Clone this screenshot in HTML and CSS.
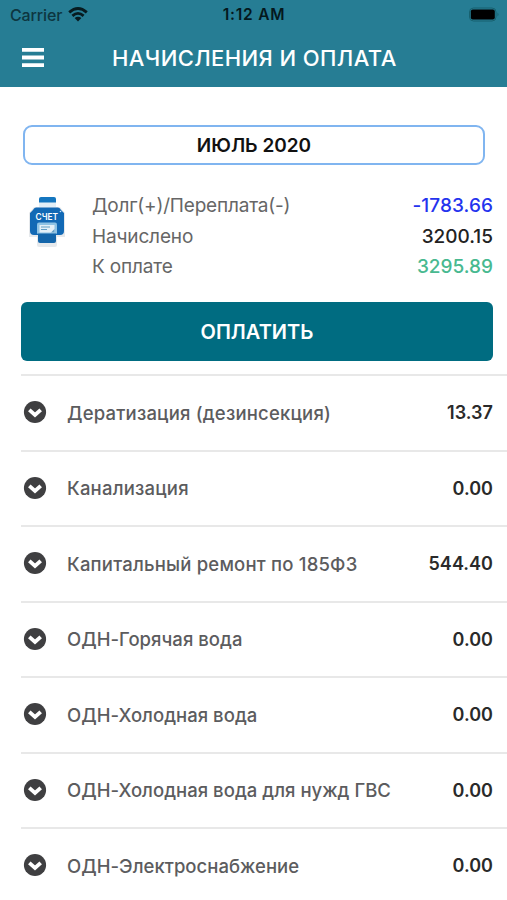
FILE: index.html
```html
<!DOCTYPE html>
<html lang="ru">
<head>
<meta charset="utf-8">
<title>Начисления и оплата</title>
<link rel="stylesheet" href="styles.css">
</head>
<body>
<svg width="0" height="0" class="defs" aria-hidden="true">
  <symbol id="chev" viewBox="0 0 24 24">
    <circle cx="12" cy="12" r="11.1" fill="#3f3f41"/>
    <path d="M6.3 9.8 L12 14.9 L17.7 9.8" fill="none" stroke="#fff" stroke-width="3.8"/>
  </symbol>
</svg>
<header class="header">
  <div class="status">
    <div class="carrier"><span>Carrier</span>
      <svg class="wifi" width="20" height="15" viewBox="0 0 20 15"><g fill="none" stroke="#071b20" stroke-width="2.8"><path d="M1.2 5.4 Q10 -2.4 18.8 5.4"/><path d="M4.4 8.9 Q10 3.9 15.6 8.9"/></g><path d="M6.6 11.1 Q10 8.2 13.4 11.1 L10 14.6Z" fill="#071b20"/></svg>
    </div>
    <span class="time">1:12 AM</span>
    <svg class="battery" width="32" height="15" viewBox="0 0 32 15"><rect x=".5" y="1" width="26.5" height="13" rx="4" fill="none" stroke="#17616f" stroke-width="1"/><rect x="1.8" y="2.5" width="24" height="10" rx="2" fill="#000"/><path d="M28.5 5.5 Q30.5 7.5 28.5 9.5Z" fill="#17616f"/></svg>
  </div>
  <div class="bar">
    <svg class="menu" width="22" height="19" viewBox="0 0 22 19"><path d="M0 1.9H22M0 9.5H22M0 17.1H22" stroke="#fff" stroke-width="3.8"/></svg>
    <h1 class="title">НАЧИСЛЕНИЯ И ОПЛАТА</h1>
  </div>
</header>
<main>
  <div class="month"><span>ИЮЛЬ 2020</span></div>
  <section class="summary">
    <svg class="printer" width="40" height="54" viewBox="0 0 40 54">
      <path d="M2 18 L7 12 H33 L38 18 V42 H30 V50 Q30 52 28 52 H12 Q10 52 10 50 V42 H2Z" fill="#d9dde2" opacity=".65"/>
      <path d="M12 10 V4 Q12 2 14 2 H27 Q29 2 29 4 V10Z" fill="#1476bf"/>
      <rect x="12" y="7.5" width="17" height="5" fill="#e3eff7"/>
      <path d="M9 12.5 H31 Q33 12.5 34 15 L37 18 V36 Q37 40 33 40 H7 Q3 40 3 36 V18 L6 15 Q7 12.5 9 12.5Z" fill="#1269b5"/>
      <circle cx="33.5" cy="16.5" r=".8" fill="#c5e4ff"/>
      <text x="19.8" y="25.4" text-anchor="middle" class="ptext">СЧЕТ</text>
      <rect x="10" y="27.5" width="20" height="12" rx="2" fill="#8fc3e4"/>
      <rect x="12.5" y="30" width="15" height="7.5" fill="#e4f0f7"/>
      <path d="M14 32H23M14 34.5H20" stroke="#639fc6" stroke-width="1.2"/>
      <path d="M24 37.5 L27.5 34 V37.5Z" fill="#639fc6"/>
      <path d="M11 38.5 H29 V46 Q29 48 27 48 H13 Q11 48 11 46Z" fill="#1365aa"/>
    </svg>
    <div class="lines">
      <div class="line"><span class="s1">Долг(+)/Переплата(-)</span><b class="blue">-1783.66</b></div>
      <div class="line mid"><span class="s2">Начислено</span><b class="dark">3200.15</b></div>
      <div class="line"><span class="s3">К оплате</span><b class="green">3295.89</b></div>
    </div>
  </section>
  <button class="pay"><span>ОПЛАТИТЬ</span></button>
  <ul class="list">
    <li><svg class="chev"><use href="#chev"/></svg><span class="wide">Дератизация (дезинсекция)</span><b>13.37</b></li>
    <li><svg class="chev"><use href="#chev"/></svg><span class="wide">Канализация</span><b>0.00</b></li>
    <li><svg class="chev"><use href="#chev"/></svg><span class="wide">Капитальный ремонт по 185ФЗ</span><b>544.40</b></li>
    <li><svg class="chev"><use href="#chev"/></svg><span>ОДН-Горячая вода</span><b>0.00</b></li>
    <li><svg class="chev"><use href="#chev"/></svg><span>ОДН-Холодная вода</span><b>0.00</b></li>
    <li><svg class="chev"><use href="#chev"/></svg><span>ОДН-Холодная вода для нужд ГВС</span><b>0.00</b></li>
    <li><svg class="chev"><use href="#chev"/></svg><span>ОДН-Электроснабжение</span><b>0.00</b></li>
  </ul>
</main>
</body>
</html>
```
FILE: styles.css
```css
* { box-sizing: border-box; }
body { margin: 0; height: 900px; overflow: hidden; background: #fff; font-family: Inter, "Liberation Sans", sans-serif; }
.defs { position: absolute; }
.header { height: 87px; background: #267d94; }
.status { height: 29px; display: grid; grid-template-columns: 1fr auto 1fr; align-items: center; padding: 0 6px 0 10px; }
.carrier { display: flex; align-items: center; gap: 6px; font-size: 16px; font-weight: 500; color: #0d3640; letter-spacing: -.15px; }
.time { font-size: 15.5px; font-weight: 600; color: #04181d; letter-spacing: .75px; margin-left: -3px; }
.battery { justify-self: end; }
.bar { height: 58px; display: flex; align-items: center; padding: 0 22px; }
.menu { margin-top: -1px; }
.title { margin: 0 0 0 68px; font-size: 22px; font-weight: 500; color: #fff; white-space: nowrap; letter-spacing: .4px; }
.month { margin: 38px 22px 0 23px; height: 40px; border: 2px solid #80b5f0; border-radius: 9px; display: flex; align-items: center; justify-content: center; font-size: 19px; font-weight: 600; color: #111; }
.summary { display: flex; margin: 25px 14px 0 27px; height: 92px; }
.printer { margin-top: 5px; flex: none; }
.ptext { font-size: 8.3px; font-weight: 600; fill: #fff; }
.lines { flex: 1; margin-left: 25px; }
.line { height: 30.5px; display: flex; justify-content: space-between; align-items: center; font-size: 19px; color: #666; }
.line.mid { padding-top: 2px; }
.s1 { letter-spacing: -.2px; }
.s2, .s3 { letter-spacing: -.15px; }
.line b { font-weight: 500; }
.line .blue { color: #2433ee; letter-spacing: .1px; margin-right: -.1px; }
.line .dark { color: #222; }
.line .green { color: #48b990; }
.pay { display: flex; align-items: center; justify-content: center; margin: 20px 14px 0 21px; width: 472px; height: 59px; border: 0; border-radius: 6px; background: #006c81; color: #fff; font: 600 20px Inter, sans-serif; }
.list { list-style: none; margin: 13px 0 0 21px; padding: 0; }
.list li { height: 75.5px; border-top: 2px solid #e8e8e8; display: flex; align-items: center; padding-right: 14px; font-size: 18.5px; font-weight: 500; color: #5c5c5e; letter-spacing: .03px; }
.chev { width: 24px; height: 24px; margin: -1px 20px 0 2px; flex: none; }
.list .wide { letter-spacing: .2px; }
.list b { margin-left: auto; font-weight: 600; color: #2a2a2a; font-size: 18px; }
```
